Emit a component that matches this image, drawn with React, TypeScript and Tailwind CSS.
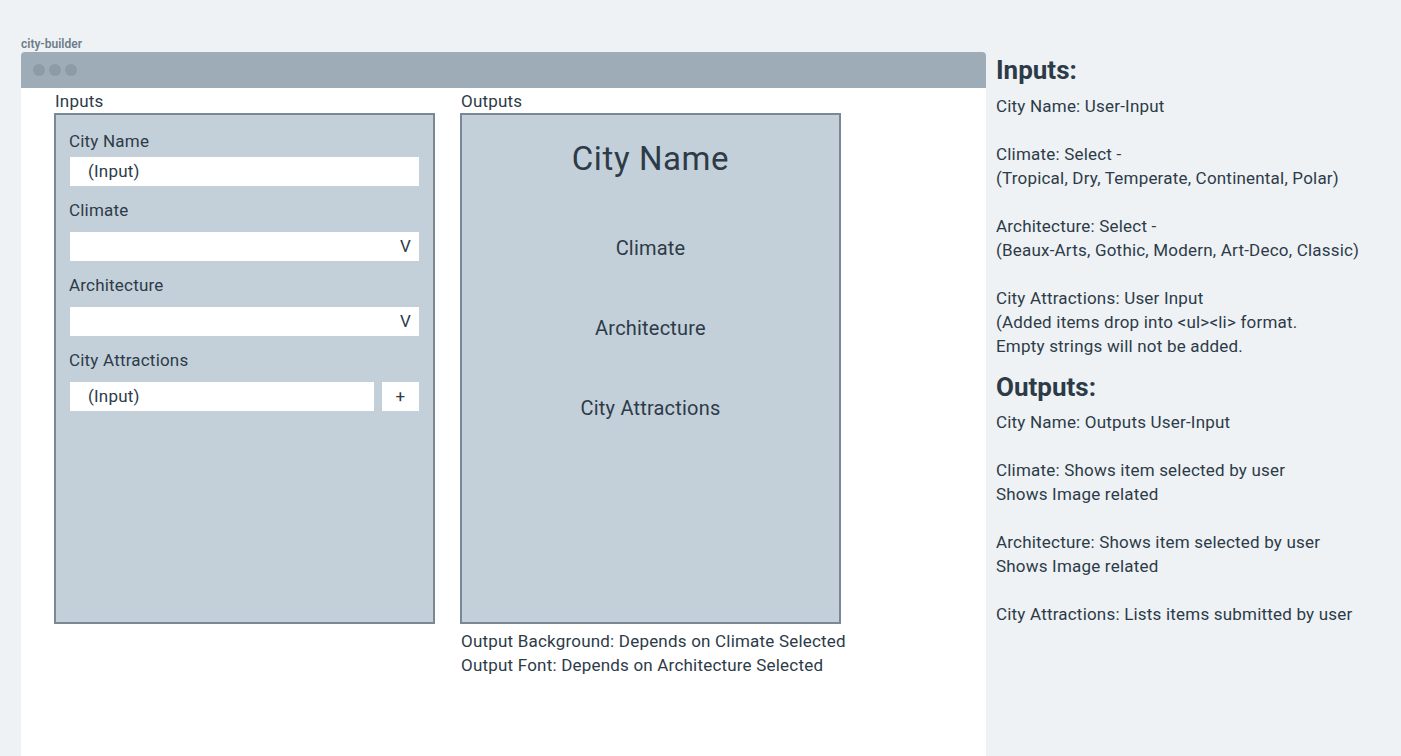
import { ReactNode } from 'react';

const font = { fontFamily: 'Roboto, "Noto Sans", sans-serif' };

function Label({ children }: { children: ReactNode }) {
  return <div className="text-[17px] leading-[24px] tracking-[0.2px] text-[#2d3b48]">{children}</div>;
}

function Field({ text, arrow }: { text?: string; arrow?: boolean }) {
  return (
    <div className="h-[29px] bg-white flex items-center justify-between pl-[18px] pr-[8px] text-[17px] tracking-[0.2px] text-[#2d3b48]">
      <span>{text}</span>
      {arrow && <span>V</span>}
    </div>
  );
}

export default function App() {
  const inputNotes = [
    ['City Name: User-Input'],
    ['Climate: Select -', '(Tropical, Dry, Temperate, Continental, Polar)'],
    ['Architecture: Select -', '(Beaux-Arts, Gothic, Modern, Art-Deco, Classic)'],
    ['City Attractions: User Input', '(Added items drop into <ul><li> format.', 'Empty strings will not be added.'],
  ];
  const outputNotes = [
    ['City Name: Outputs User-Input'],
    ['Climate: Shows item selected by user', 'Shows Image related'],
    ['Architecture: Shows item selected by user', 'Shows Image related'],
    ['City Attractions: Lists items submitted by user'],
  ];

  return (
    <div className="w-[1401px] h-[756px] overflow-hidden bg-[#eef2f5] flex text-[#2d3b48]" style={font}>
      {/* wireframe window */}
      <div className="ml-[21px] w-[965px] pt-[36px] flex flex-col">
        <div className="text-[12px] leading-[16px] font-semibold text-[#6f7c89]">city-builder</div>
        <div className="flex-1 flex flex-col rounded-t-[4px] overflow-hidden">
          <div className="h-[36px] bg-[#9eacb8] flex items-center gap-[4px] pl-[12px]">
            <span className="w-[12px] h-[12px] rounded-full bg-[#8c9ba8]" />
            <span className="w-[12px] h-[12px] rounded-full bg-[#8c9ba8]" />
            <span className="w-[12px] h-[12px] rounded-full bg-[#8c9ba8]" />
          </div>
          <div className="flex-1 bg-white flex gap-[25px] pl-[33px] pt-[1px] tracking-[0.2px]">
            {/* inputs */}
            <div className="w-[381px] flex flex-col">
              <div className="text-[17px] leading-[24px] pl-[1px]">Inputs</div>
              <div className="h-[511px] border-2 border-[#7a8896] bg-[#c3d0da] pl-[13px] pr-[14px] pt-[14px] flex flex-col">
                <Label>City Name</Label>
                <div className="mt-[4px] ml-[1px]"><Field text="(Input)" /></div>
                <div className="mt-[12px]"><Label>Climate</Label></div>
                <div className="mt-[10px] ml-[1px]"><Field arrow /></div>
                <div className="mt-[12px]"><Label>Architecture</Label></div>
                <div className="mt-[10px] ml-[1px]"><Field arrow /></div>
                <div className="mt-[12px]"><Label>City Attractions</Label></div>
                <div className="mt-[10px] ml-[1px] flex gap-[8px]">
                  <div className="flex-1"><Field text="(Input)" /></div>
                  <div className="w-[37px] h-[29px] bg-white flex items-center justify-center text-[17px]">+</div>
                </div>
              </div>
            </div>
            {/* outputs */}
            <div className="w-[381px] flex flex-col">
              <div className="text-[17px] leading-[24px] pl-[1px]">Outputs</div>
              <div className="h-[511px] border-2 border-[#7a8896] bg-[#c3d0da] flex flex-col items-center pt-[22px]">
                <div className="text-[33px] leading-[44px] tracking-[0.6px]">City Name</div>
                <div className="mt-[54px] text-[20px] leading-[26px]">Climate</div>
                <div className="mt-[54px] text-[20px] leading-[26px]">Architecture</div>
                <div className="mt-[54px] text-[20px] leading-[26px]">City Attractions</div>
              </div>
              <div className="mt-[5px] text-[17px] leading-[24px] pl-[1px] whitespace-nowrap">
                <div>Output Background: Depends on Climate Selected</div>
                <div>Output Font: Depends on Architecture Selected</div>
              </div>
            </div>
          </div>
        </div>
      </div>
      {/* notes */}
      <div className="ml-[10px] pt-[53px] flex flex-col text-[17px] leading-[24px] tracking-[0.2px] whitespace-nowrap">
        <div className="text-[26px] leading-[34px] font-bold tracking-normal">Inputs:</div>
        <div className="mt-[7px] flex flex-col gap-[24px]">
          {inputNotes.map((g, i) => (
            <div key={i}>{g.map((l) => <div key={l}>{l}</div>)}</div>
          ))}
        </div>
        <div className="mt-[12px] text-[26px] leading-[34px] font-bold tracking-normal">Outputs:</div>
        <div className="mt-[6px] flex flex-col gap-[24px]">
          {outputNotes.map((g, i) => (
            <div key={i}>{g.map((l) => <div key={l}>{l}</div>)}</div>
          ))}
        </div>
      </div>
    </div>
  );
}
